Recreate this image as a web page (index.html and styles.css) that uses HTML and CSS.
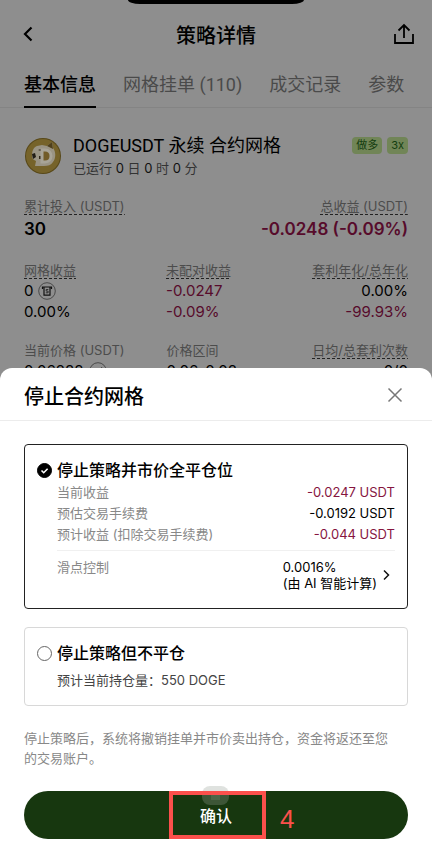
FILE: index.html
```html
<!DOCTYPE html>
<html lang="zh-CN">
<head>
  <meta charset="UTF-8" />
  <meta name="viewport" content="width=device-width, initial-scale=1.0"/>
  <title>策略详情</title>
  <link rel="stylesheet" href="styles.css">
</head>
<body>
  <div class="page">
    <div class="notch"></div>
    <header class="topbar">
      <button type="button" class="icon-btn back" aria-label="返回">
        <svg width="10" height="16" viewBox="0 0 10 16"><path d="M8.500 1.500L2 8l6.500 6.500" fill="none" stroke="#000" stroke-width="2.200"/></svg>
      </button>
      <h1>策略详情</h1>
      <button type="button" class="icon-btn share" aria-label="分享">
        <svg width="22" height="22" viewBox="0 0 22 22"><path d="M2 11v9h18v-9M11 15V2.500M5.500 7.500L11 2l5.500 5.500" fill="none" stroke="#000" stroke-width="1.800"/></svg>
      </button>
    </header>

    <nav class="tabs">
      <a href="#" class="active">基本信息</a>
      <a href="#">网格挂单 (110)</a>
      <a href="#">成交记录</a>
      <a href="#">参数</a>
    </nav>

    <main class="detail">
      <div class="pair">
        <svg class="coin" width="38" height="38" viewBox="0 0 38 38">
          <circle cx="19" cy="19" r="18" fill="#584818"/>
          <circle cx="19" cy="19" r="17" fill="#76632a"/>
          <path d="M8 19c0-6 2-9 5-10l5-1 5 1 5-4 1 6c3 4 3 10 0 14-2 3-5 4-9 4h-9l1-5c-3-1-4-3-4-5z" fill="#9a9484"/>
          <path d="M23 9l5-4 1 7z" fill="#4f401c"/>
          <path d="M8 17l3-1 1 4-3 2z" fill="#201c14"/>
          <path d="M14 13l3-1v2zM15 19h2v3h-2z" fill="#332b1b"/>
          <path d="M18 13v12h3c8 0 8-12 0-12z" fill="#725c28" stroke="#a8a497" stroke-width="3"/>
        </svg>
        <div class="pair-text">
          <h2>DOGEUSDT 永续 合约网格</h2>
          <p>已运行 <b>0</b> 日 <b>0</b> 时 <b>0</b> 分</p>
        </div>
        <div class="tags">
          <span class="tag">做多</span>
          <span class="tag">3x</span>
        </div>
      </div>

      <div class="totals">
        <div>
          <span class="label dashed">累计投入 (USDT)</span>
          <strong>30</strong>
        </div>
        <div class="right">
          <span class="label dashed">总收益 (USDT)</span>
          <strong class="loss">-0.0248 (-0.09%)</strong>
        </div>
      </div>

      <div class="stats">
        <div>
          <span class="label dashed">网格收益</span>
          <span class="value">0
            <svg width="18" height="18" viewBox="0 0 18 18"><circle cx="9" cy="9" r="8.300" fill="none" stroke="#4a4a4a"/><path d="M4.500 7V5h9v2M6 5v8.200h6V5" fill="none" stroke="#111" stroke-width="1.200"/><path d="M10.300 7.500H8.200v1.600h1.900v1.700H7.800" fill="none" stroke="#222" stroke-width=".9"/></svg>
          </span>
          <span class="value">0.00%</span>
        </div>
        <div>
          <span class="label dashed">未配对收益</span>
          <span class="value loss">-0.0247</span>
          <span class="value loss">-0.09%</span>
        </div>
        <div class="right">
          <span class="label dashed">套利年化/总年化</span>
          <span class="value">0.00%</span>
          <span class="value loss">-99.93%</span>
        </div>
      </div>

      <div class="stats">
        <div>
          <span class="label">当前价格 (USDT)</span>
          <span class="value">0.06288
            <svg width="18" height="18" viewBox="0 0 18 18"><circle cx="9" cy="9" r="8.300" fill="none" stroke="#4a4a4a"/><path d="M5 10l3-3 2 2 3-4" fill="none" stroke="#444"/></svg>
          </span>
        </div>
        <div>
          <span class="label">价格区间</span>
          <span class="value">0.06-0.08</span>
        </div>
        <div class="right">
          <span class="label dashed">日均/总套利次数</span>
          <span class="value">0/0</span>
        </div>
      </div>
    </main>
  </div>

  <form class="sheet">
    <div class="sheet-head">
      <h2>停止合约网格</h2>
      <button type="button" class="icon-btn" aria-label="关闭">
        <svg width="16" height="16" viewBox="0 0 16 16"><path d="M1.500 1.500l13 13M14.500 1.500l-13 13" stroke="#777" stroke-width="1.500"/></svg>
      </button>
    </div>

    <div class="option selected">
      <div class="option-title">
        <span class="radio">
          <input type="radio" name="mode" id="closeAll" checked />
          <svg width="15" height="15" viewBox="0 0 15 15"><path d="M4.500 7.500l2.200 2.200 3.900-3.900" fill="none" stroke="#fff" stroke-width="1.600"/></svg>
        </span>
        <label for="closeAll">停止策略并市价全平仓位</label>
      </div>
      <dl class="rows">
        <div><dt>当前收益</dt><dd class="loss">-0.0247 USDT</dd></div>
        <div><dt>预估交易手续费</dt><dd>-0.0192 USDT</dd></div>
        <div><dt>预计收益 (扣除交易手续费)</dt><dd class="loss">-0.044 USDT</dd></div>
      </dl>
      <div class="slippage">
        <span>滑点控制</span>
        <button type="button">
          <span>0.0016%<br>(由 AI 智能计算)</span>
          <svg width="7" height="12" viewBox="0 0 7 12"><path d="M1 1.500L5.500 6 1 10.500" fill="none" stroke="#111" stroke-width="1.500"/></svg>
        </button>
      </div>
    </div>

    <div class="option">
      <div class="option-title">
        <span class="radio">
          <input type="radio" name="mode" id="keepOpen" />
        </span>
        <label for="keepOpen">停止策略但不平仓</label>
      </div>
      <p class="position">预计当前持仓量：550 DOGE</p>
    </div>

    <p class="note">停止策略后，系统将撤销挂单并市价卖出持仓，资金将返还至您的交易账户。</p>

    <div class="actions">
      <button type="submit" class="confirm">确认</button>
      <span class="smudge"></span>
      <span class="marker"></span>
      <span class="step">4</span>
    </div>
  </form>
</body>
</html>
```

FILE: styles.css
```css
* {
  box-sizing: border-box;
}
body {
  font-family: Inter, 'Noto Sans CJK SC', sans-serif;
  font-size: 13px;
  color: #000;
  background: #8e8e8e;
  height: 100vh;
  margin: 0;
  overflow: hidden;
}
h1, h2, p, dl, dd {
  margin: 0;
}
button {
  font-family: inherit;
  color: inherit;
  background: none;
  border: none;
  padding: 0;
  cursor: pointer;
}
svg {
  display: block;
}
.notch {
  width: 176px;
  height: 4px;
  margin: 0 auto;
  background: #000;
  border-radius: 0 0 12px 12px / 0 0 4px 4px;
}
.topbar {
  display: grid;
  grid-template-columns: 1fr auto 1fr;
  align-items: center;
  height: 60px;
  padding: 0 17px;
}
.topbar h1 {
  font-size: 20px;
  font-weight: 500;
}
.back {
  padding-left: 6px;
}
.share {
  justify-self: end;
}
.tabs {
  display: flex;
  gap: 27px;
  height: 44px;
  padding: 0 24px;
  border-bottom: 1px solid #848484;
}
.tabs a {
  height: 44px;
  line-height: 41px;
  font-size: 18px;
  color: #4a4a4a;
  text-decoration: none;
  white-space: nowrap;
}
.tabs a, .pair h2 {
  font-family: Roboto, 'Noto Sans CJK SC', sans-serif;
}
.tabs .active {
  color: #000;
  font-weight: 500;
  border-bottom: 2px solid #000;
}
.detail {
  padding: 25px 24px 0;
}
.pair {
  display: flex;
  gap: 11px;
  padding-bottom: 18px;
}
.coin {
  margin-top: 4px;
}
.pair-text {
  flex: 1;
}
.pair h2 {
  font-size: 18px;
  font-weight: 400;
  line-height: 25px;
  white-space: nowrap;
}
.pair p {
  font-size: 13px;
  line-height: 21px;
  color: #333;
}
.pair b {
  font-weight: 400;
  color: #111;
}
.tags {
  display: flex;
  gap: 5px;
  padding-top: 4px;
}
.tag {
  height: 17px;
  padding: 0 4px;
  border-radius: 4px;
  background: #718557;
  color: #143d10;
  font-size: 11px;
  line-height: 17px;
}
.totals {
  display: flex;
  justify-content: space-between;
  padding-bottom: 18px;
}
.totals strong {
  display: block;
  font-size: 17px;
  font-weight: 600;
  line-height: 28px;
}
.stats {
  display: grid;
  grid-template-columns: repeat(3, 1fr);
  column-gap: 42px;
  padding-bottom: 19px;
  white-space: nowrap;
}
.stats .label {
  margin-bottom: 1px;
}
.right {
  display: flex;
  flex-direction: column;
  align-items: flex-end;
}
.label {
  display: inline-block;
  height: 18px;
  font-size: 13px;
  line-height: 18px;
  color: #4c4c4c;
  vertical-align: top;
}
.dashed {
  background: repeating-linear-gradient(90deg, #222 0 3px, transparent 3px 5px) bottom / 100% 1px no-repeat;
}
.value {
  display: flex;
  align-items: center;
  gap: 5px;
  font-size: 15px;
  line-height: 21px;
  height: 21px;
}
.page .loss {
  color: #570b2b;
}
.sheet {
  position: fixed;
  left: 0;
  right: 0;
  bottom: 0;
  padding-bottom: 10px;
  background: #fff;
  border-radius: 12px 12px 0 0;
}
.sheet-head {
  display: flex;
  align-items: center;
  justify-content: space-between;
  height: 53px;
  padding: 2px 29px 0 24px;
  border-bottom: 1px solid #ececec;
}
.sheet-head h2 {
  font-size: 20px;
  font-weight: 500;
}
.option {
  margin: 18px 24px 0;
  padding: 13px 12px 15px;
  border: 1px solid #d8d8d8;
  border-radius: 4px;
}
.selected {
  margin-top: 23px;
  padding-bottom: 17px;
  border-color: #222;
}
.option-title {
  display: flex;
  align-items: center;
  gap: 5px;
  height: 24px;
}
.option-title label {
  font-size: 16px;
  font-weight: 500;
  line-height: 24px;
}
.radio {
  position: relative;
  width: 15px;
  height: 15px;
}
.radio input {
  appearance: none;
  display: block;
  width: 15px;
  height: 15px;
  margin: 0;
  border: 1px solid #666;
  border-radius: 50%;
}
.radio input:checked {
  background: #000;
  border-color: #000;
}
.radio svg {
  position: absolute;
  top: 0;
  left: 0;
  pointer-events: none;
}
.rows, .slippage, .position {
  margin-left: 20px;
}
.rows div {
  display: flex;
  justify-content: space-between;
  line-height: 21px;
}
.rows dt, .slippage > span {
  color: #888;
}
.sheet .loss {
  color: #86153f;
}
.slippage {
  display: flex;
  justify-content: space-between;
  margin-top: 5px;
  padding-top: 8px;
  border-top: 1px solid #f0f0f0;
  line-height: 16px;
}
.slippage button {
  display: flex;
  align-items: center;
  gap: 6px;
  padding-right: 5px;
  font-size: 13px;
  line-height: 16px;
  text-align: left;
}
.position {
  margin-top: 5px;
  line-height: 20px;
  color: #444;
}
.note {
  margin: 22px 24px 23px;
  padding-right: 12px;
  line-height: 20px;
  color: #888;
}
.actions {
  position: relative;
  margin: 0 24px;
}
.confirm {
  width: 100%;
  height: 48px;
  display: block;
  border-radius: 24px;
  background: #17370f;
  color: #fff;
  font-size: 16px;
  font-weight: 500;
}
/* tutorial annotations drawn over the confirm button */
.smudge {
  position: absolute;
  top: -5px;
  left: 178px;
  width: 27px;
  height: 19px;
  border-radius: 8px;
  background: linear-gradient(#4d6648, #4d6648) 9px 8px / 9px 6px no-repeat, rgba(150, 160, 150, 0.3);
}
.marker {
  position: absolute;
  top: 0;
  left: 145px;
  width: 97px;
  height: 48px;
  border: 4px solid #fb504c;
}
.step {
  position: absolute;
  top: 12px;
  left: 256px;
  font-family: 'Liberation Sans', sans-serif;
  font-size: 26px;
  line-height: 32px;
  color: #fb504c;
}
```
